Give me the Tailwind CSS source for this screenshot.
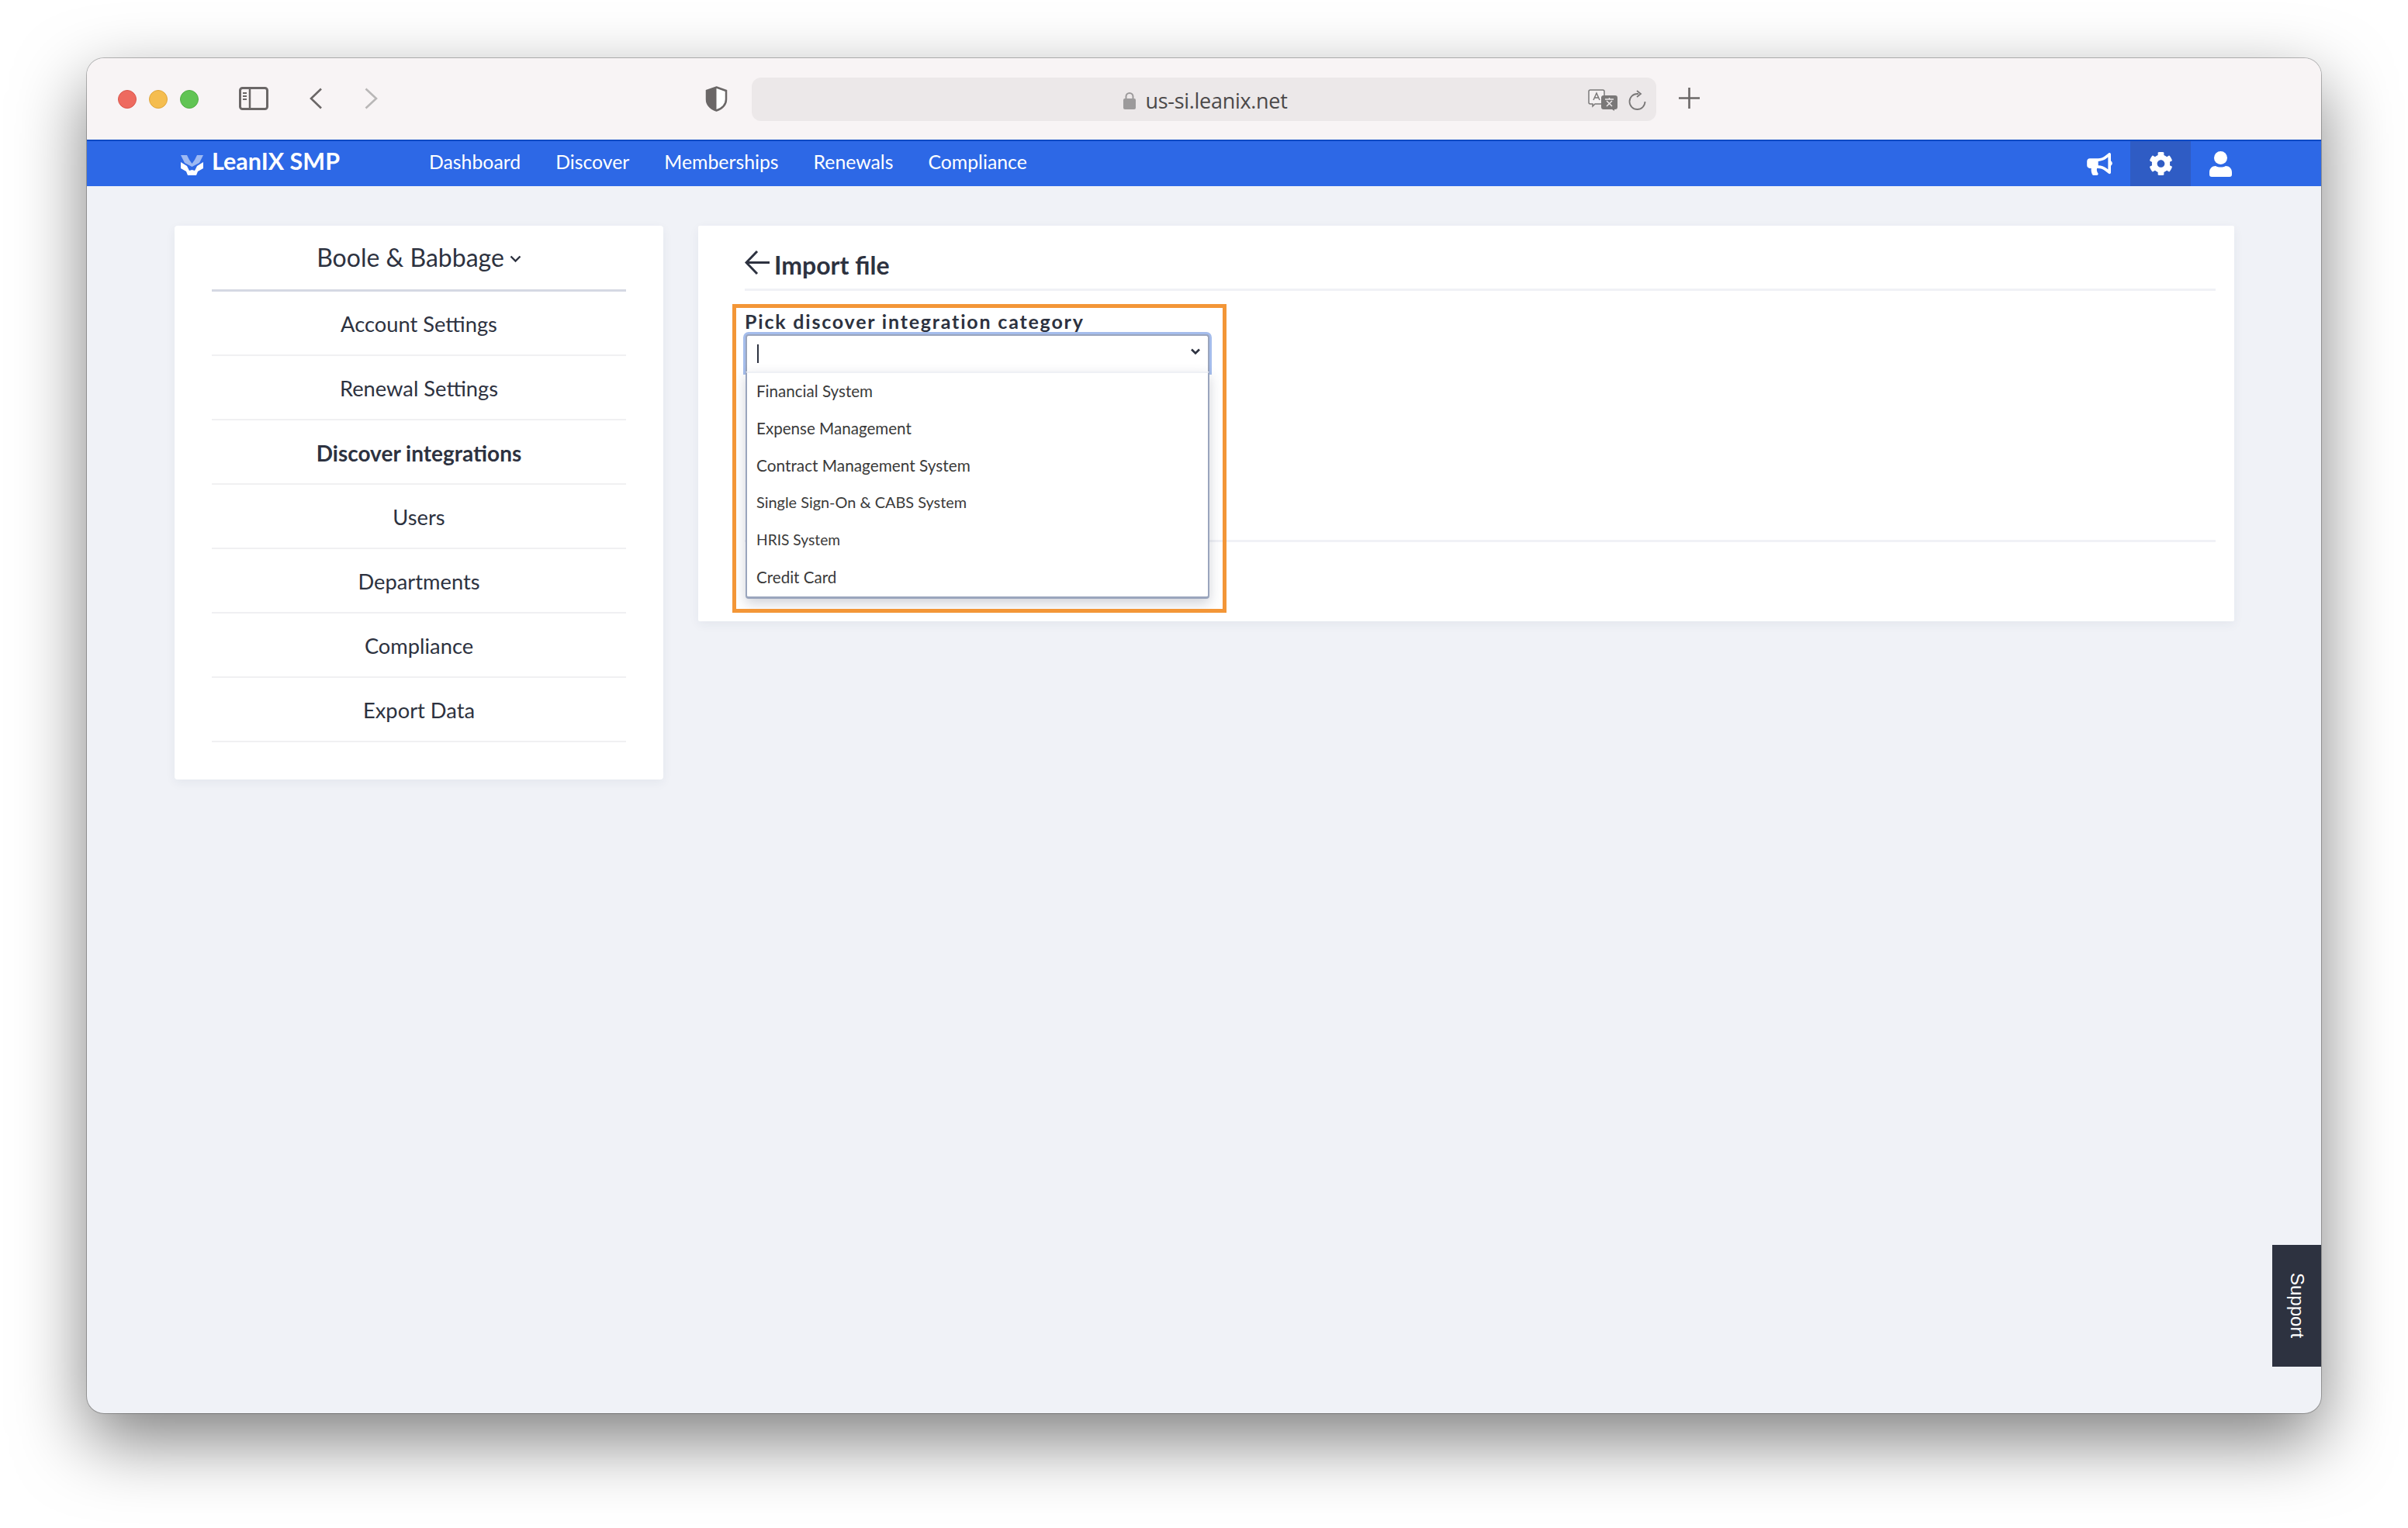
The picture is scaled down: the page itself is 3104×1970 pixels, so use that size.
<!DOCTYPE html>
<html>
<head>
<meta charset="utf-8">
<script src="https://cdn.jsdelivr.net/npm/@tailwindcss/browser@4"></script>
</head>
<body class="bg-white w-[3104px] h-[1970px] overflow-hidden font-['Lato','Inter',sans-serif] text-[#2d3240]">
<div class="pt-[75px] pl-[112px]">
<div class="relative w-[2880px] h-[1747px] flex flex-col rounded-[22px] overflow-hidden bg-[#f0f2f7] shadow-[0_0_0_1px_rgba(0,0,0,0.25),0_35px_90px_rgba(0,0,0,0.5)]">

  <!-- browser chrome -->
  <div class="h-[105px] shrink-0 bg-[#f8f4f5] flex items-start">
    <div class="flex gap-[16px] ml-[40px] mt-[41px]">
      <span class="w-[24px] h-[24px] rounded-full bg-[#ee6a5f] border border-[#d9574d]"></span>
      <span class="w-[24px] h-[24px] rounded-full bg-[#f5bd4f] border border-[#dfa63c]"></span>
      <span class="w-[24px] h-[24px] rounded-full bg-[#61c454] border border-[#52ad46]"></span>
    </div>
    <svg class="ml-[52px] mt-[37px]" width="38" height="30" viewBox="0 0 38 30" fill="none"><rect x="1.5" y="1.5" width="35" height="27" rx="3" stroke="#6b6767" stroke-width="3"/><path d="M14 2v26" stroke="#6b6767" stroke-width="2.5"/><path d="M5 8h5M5 12h5M5 16h5" stroke="#6b6767" stroke-width="2"/></svg>
    <svg class="ml-[53px] mt-[38px]" width="16" height="28" viewBox="0 0 16 28" fill="none"><path d="M15 1.5 2 14l13 12.5" stroke="#6b6767" stroke-width="2.6"/></svg>
    <svg class="ml-[55px] mt-[38px]" width="17" height="28" viewBox="0 0 17 28" fill="none"><path d="M1.5 1.5 15 14 1.5 26.5" stroke="#b9b7b7" stroke-width="2.6"/></svg>
    <svg class="ml-[422px] mt-[36px]" width="29" height="33" viewBox="0 0 29 33" fill="none"><path d="M14.5 1.5 27 6v11c0 7-5.5 12-12.500 14.500C7.500 29 2 24 2 17V6z" fill="#fff" stroke="#6b6767" stroke-width="2.500"/><path d="M14.500 1.500V31.500C7.500 29 2 24 2 17V6z" fill="#6b6767"/></svg>
    <div class="relative ml-[31px] mt-[25px] w-[1166px] h-[56px] rounded-[12px] bg-[#ece8e9] flex items-center justify-center pl-[4px]">
      <svg class="mr-[12px] mt-[2px]" width="16" height="23" viewBox="0 0 16 23" fill="none"><path d="M3.500 10V6.500a4.500 4.500 0 0 1 9 0V10" stroke="#9c9a9b" stroke-width="2"/><rect y="9" width="16" height="14" rx="2" fill="#9c9a9b"/></svg>
      <span class="text-[27px] leading-none text-[#4b4949] font-['Open_Sans',sans-serif] tracking-[-0.3px] mt-[2px]">us-si.leanix.net</span>
      <svg class="absolute left-[1078px] top-[15px]" width="38" height="28" viewBox="0 0 38 28" fill="none"><path d="M3 1h16a2 2 0 0 1 2 2v14a2 2 0 0 1-2 2H9l-3 3v-3H3a2 2 0 0 1-2-2V3a2 2 0 0 1 2-2z" fill="#f4f1f2" stroke="#7a7878" stroke-width="1.500"/><path d="M7 14 11 5l4 9M8.500 11h5" stroke="#7a7878" stroke-width="1.500"/><path d="M20 8h15a3 3 0 0 1 3 3v12a3 3 0 0 1-3 3h-1v2l-3-2H20a3 3 0 0 1-3-3V11a3 3 0 0 1 3-3z" fill="#7a7878"/><path d="M22 13h11M27.500 11v2M24 22l7-7M31 22l-7-7" stroke="#ece8e9" stroke-width="1.500"/></svg>
      <svg class="absolute left-[1130px] top-[16px]" width="23" height="26" viewBox="0 0 23 26" fill="none"><path d="M13 5H11.500a10 10 0 1 0 10 10" stroke="#7a7878" stroke-width="1.800"/><path d="m11 1 5 4-5 4" stroke="#7a7878" stroke-width="1.800"/></svg>
    </div>
    <svg class="ml-[29px] mt-[38px]" width="27" height="27" viewBox="0 0 27 27" fill="none"><path d="M13.500 0v27M0 13.500h27" stroke="#6b6767" stroke-width="2.600"/></svg>
  </div>

  <!-- app nav -->
  <div class="h-[60px] shrink-0 bg-[#2d68e6] border-t-[2px] border-[#0b49c4] flex items-center text-white">
    <svg class="ml-[121px] mt-[4px]" width="29" height="26" viewBox="0 0 29 26"><path d="M0 0h8l3 6 3.500 5L18 6l3-6h8l-5 10-9.500 5L5 10z" fill="#9db9f3"/><path d="M0 9l8 5 3 6 3.500-1 3.500 1 3-6 8-5v8l-7 4-2 5H9l-2-5-7-4z" fill="#fff"/></svg>
    <span class="ml-[11px] w-[280px] text-[30.5px] leading-none font-bold mt-[-7px]">LeanIX SMP</span>
    <nav class="flex gap-[45px] text-[24.8px] leading-none mt-[-3px]">
      <a>Dashboard</a><a>Discover</a><a>Memberships</a><a>Renewals</a><a>Compliance</a>
    </nav>
    <div class="ml-auto flex h-full items-center">
      <svg width="33" height="29" viewBox="0 0 576 512" fill="#fff"><path d="M576 240c0-23.630-12.950-44.040-32-55.120V32.010C544 23.260 537.020 0 512 0c-7.120 0-14.190 2.380-19.980 7.020l-85.030 68.030C364.280 109.190 310.660 128 256 128H64c-35.350 0-64 28.650-64 64v96c0 35.350 28.650 64 64 64h33.700c-1.390 10.480-2.180 21.140-2.180 32 0 39.770 9.260 77.350 25.560 110.940 5.190 10.690 16.520 17.060 28.400 17.060h74.280c26.050 0 41.690-29.840 25.900-50.560-16.400-21.520-26.150-48.360-26.150-77.440 0-11.110 1.620-21.790 4.410-32H256c54.660 0 108.280 18.810 150.980 52.950l85.030 68.030a32.023 32.023 0 0 0 19.980 7.020c24.920 0 32-22.780 32-32V295.130C563.050 284.040 576 263.630 576 240zm-96 141.420l-33.050-26.440C392.950 311.780 325.120 288 256 288v-96c69.120 0 136.950-23.780 190.950-66.980L480 98.580v282.840z"/></svg>
      <div class="ml-[23px] w-[78px] h-full bg-[#2f5cc4] flex items-center justify-center">
        <svg width="31" height="32" viewBox="0 0 512 512" fill="#fff"><path d="M487.400 315.700l-42.600-24.600c4.300-23.200 4.300-47 0-70.200l42.600-24.600c4.900-2.800 7.100-8.600 5.500-14-11.100-35.600-30-67.800-54.700-94.600-3.800-4.100-10-5.100-14.800-2.300L380.800 110c-17.900-15.400-38.500-27.300-60.800-35.100V25.800c0-5.600-3.900-10.500-9.400-11.700-36.700-8.200-74.300-7.800-109.200 0-5.500 1.200-9.400 6.100-9.400 11.700V75c-22.200 7.900-42.800 19.800-60.800 35.100L88.700 85.500c-4.900-2.800-11-1.900-14.800 2.300-24.700 26.700-43.600 58.900-54.700 94.600-1.700 5.400.6 11.200 5.500 14L67.300 221c-4.300 23.200-4.300 47 0 70.200l-42.600 24.600c-4.900 2.800-7.100 8.600-5.500 14 11.100 35.600 30 67.800 54.700 94.600 3.800 4.100 10 5.100 14.800 2.300l42.600-24.600c17.900 15.400 38.500 27.300 60.800 35.100v49.200c0 5.600 3.900 10.500 9.400 11.700 36.700 8.200 74.300 7.800 109.200 0 5.500-1.200 9.400-6.100 9.400-11.700v-49.200c22.200-7.900 42.800-19.800 60.800-35.100l42.600 24.600c4.900 2.800 11 1.900 14.800-2.300 24.700-26.700 43.600-58.900 54.700-94.600 1.500-5.500-.7-11.300-5.600-14.100zM256 336c-44.100 0-80-35.900-80-80s35.900-80 80-80 80 35.900 80 80-35.900 80-80 80z"/></svg>
      </div>
      <svg class="ml-[24px] mr-[115px]" width="29" height="33" viewBox="0 0 29 33" fill="#fff"><circle cx="14.500" cy="8.500" r="8.500"/><path d="M8 19c2 1 4 1.500 6.500 1.500S19 20 21 19c4.500 0 8 3.500 8 8v3a3 3 0 0 1-3 3H3a3 3 0 0 1-3-3v-3c0-4.500 3.500-8 8-8z"/></svg>
    </div>
  </div>

  <!-- page -->
  <div class="flex items-start gap-[45px] pl-[113px] pt-[51px]">
    <aside class="w-[630px] h-[714px] shrink-0 bg-white rounded-[4px] px-[48px] shadow-[0_4px_14px_rgba(40,50,80,0.06)]">
      <div class="h-[85px] border-b-[3px] border-[#d5d8e3] flex items-center justify-center text-[32px] leading-none">
        Boole &amp; Babbage
        <svg class="ml-[7px] mt-[4px]" width="15" height="10" viewBox="0 0 15 10" fill="none"><path d="m1.500 1.500 6 6 6-6" stroke="#2d3240" stroke-width="2.400"/></svg>
      </div>
      <div class="text-[27.3px] leading-none text-center">
        <div class="h-[83px] pt-[2px] border-b-2 border-[#f0f0f2] flex items-center justify-center">Account Settings</div>
        <div class="h-[83px] pt-[2px] border-b-2 border-[#f0f0f2] flex items-center justify-center">Renewal Settings</div>
        <div class="h-[83px] pt-[2px] border-b-2 border-[#f0f0f2] flex items-center justify-center font-bold text-[28px]">Discover integrations</div>
        <div class="h-[83px] pt-[2px] border-b-2 border-[#f0f0f2] flex items-center justify-center">Users</div>
        <div class="h-[83px] pt-[2px] border-b-2 border-[#f0f0f2] flex items-center justify-center">Departments</div>
        <div class="h-[83px] pt-[2px] border-b-2 border-[#f0f0f2] flex items-center justify-center">Compliance</div>
        <div class="h-[83px] pt-[2px] border-b-2 border-[#f0f0f2] flex items-center justify-center">Export Data</div>
      </div>
    </aside>

    <main class="relative w-[1980px] h-[510px] bg-white rounded-[2px] pl-[60px] pr-[24px] shadow-[0_4px_14px_rgba(40,50,80,0.06)]">
      <div class="h-[84px] border-b-[3px] border-[#f0f1f6] flex items-center pt-[20px]">
        <svg class="mt-[-6px]" width="32" height="32" viewBox="0 0 32 32" fill="none"><path d="M32 15.500H2M16 1 2 15.500 16 30" stroke="#2d3240" stroke-width="3"/></svg>
        <span class="ml-[6px] text-[32px] leading-none font-bold">Import file</span>
      </div>
      <label class="block mt-[26px] h-[29px] text-[25px] leading-[27px] font-bold tracking-[1.8px]">Pick discover integration category</label>
      <div class="relative ml-[1px] mt-[1px] w-[598px] h-[49px] bg-white border-2 border-[#9aa5bd] border-b-0 rounded-t-[4px] shadow-[0_0_0_3px_#a5bdec]">
        <span class="absolute left-[13px] top-[11px] w-[2px] h-[24px] bg-[#2d3240]"></span>
        <svg class="absolute right-[10px] top-[16px]" width="12" height="9" viewBox="0 0 12 9" fill="none"><path d="m1 1.500 5 5 5-5" stroke="#2d3240" stroke-width="2.600"/></svg>
      </div>
      <div class="mt-[216px] border-t-[3px] border-[#f0f1f6]"></div>

      <!-- dropdown menu -->
      <ul class="absolute left-[61px] top-[188px] w-[598px] h-[293px] bg-white border-x-2 border-b-[3px] border-[#9aa5bd] border-t-2 border-t-[#eef0f5] rounded-b-[4px] shadow-[0_6px_16px_rgba(40,50,80,0.22)] text-[20.6px] leading-none text-[#3a3a3a] pl-[12px]">
        <li class="h-[47px] flex items-center">Financial System</li>
        <li class="h-[48px] flex items-center">Expense Management</li>
        <li class="h-[48px] flex items-center text-[20.8px]">Contract Management System</li>
        <li class="h-[48px] flex items-center text-[19.9px]">Single Sign-On &amp; CABS System</li>
        <li class="h-[48px] flex items-center text-[19.2px]">HRIS System</li>
        <li class="h-[48px] flex items-center">Credit Card</li>
      </ul>
      <!-- annotation frame -->
      <div class="absolute left-[44px] top-[101px] w-[637px] h-[398px] border-[5px] border-[#f39637] pointer-events-none"></div>
    </main>
  </div>

  <!-- support tab -->
  <div class="absolute right-0 top-[1530px] w-[63px] h-[157px] bg-[#2d3240] flex items-center justify-center">
    <span class="[writing-mode:vertical-rl] text-white text-[24px] leading-none font-['Liberation_Sans',sans-serif]">Support</span>
  </div>
</div>
</div>
</body>
</html>
